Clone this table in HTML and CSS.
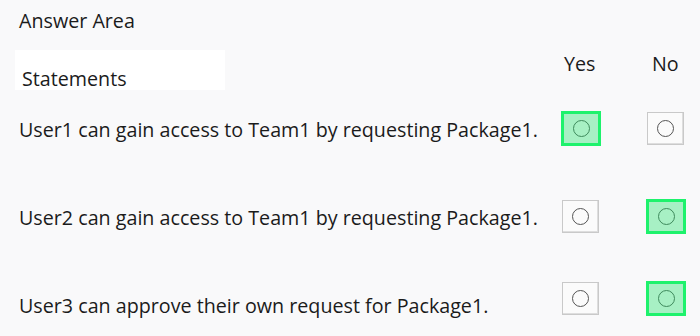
FILE: index.html
```html
<!DOCTYPE html>
<html lang="en">

<head>
    <meta charset="UTF-8">
    <meta name="viewport" content="width=device-width, initial-scale=1.0">
    <title>Answer Area</title>
    <link rel="stylesheet" href="styles.css">
</head>

<body>
    <div class="answer">
        <h2 class="answer_title">Answer Area</h2>
        <div class="answer_grid">
            <div class="head head_stmt">Statements</div>
            <div class="head head_yes">Yes</div>
            <div class="head head_no">No</div>

            <div class="stmt">User1 can gain access to Team1 by requesting Package1.</div>
            <div class="cell cell_yes"><span class="box box_on"><i class="dot"></i></span></div>
            <div class="cell cell_no"><span class="box"><i class="dot"></i></span></div>

            <div class="stmt">User2 can gain access to Team1 by requesting Package1.</div>
            <div class="cell cell_yes"><span class="box"><i class="dot"></i></span></div>
            <div class="cell cell_no"><span class="box box_on"><i class="dot"></i></span></div>

            <div class="stmt">User3 can approve their own request for Package1.</div>
            <div class="cell cell_yes"><span class="box"><i class="dot"></i></span></div>
            <div class="cell cell_no"><span class="box box_on"><i class="dot"></i></span></div>
        </div>
    </div>
</body>

</html>
```

FILE: styles.css
```css
* {
    margin: 0;
    padding: 0;
    box-sizing: border-box;
}

body {
    width: 700px;
    height: 336px;
    overflow: hidden;
    background-color: #f9f9fa;
    color: #1b1b1b;
    font-family: "Open Sans", "Noto Sans", sans-serif;
    font-size: 19.7px;
}

.answer {
    padding: 8px 0 0 19px;
}

.answer_title {
    font-size: 19.7px;
    font-weight: normal;
    line-height: 26px;
}

.answer_grid {
    display: grid;
    grid-template-columns: minmax(0, 1fr) 86px 86px;
    grid-template-rows: 50px 88px 88px 76px;
}

.head {
    line-height: 26px;
}

/* white strip behind the header label */
.head_stmt {
    align-self: end;
    width: 210px;
    height: 40px;
    margin: 0 0 -6px -4px;
    padding: 16px 0 0 7px;
    background-color: #fff;
}

.head_yes {
    padding-left: 36px;
    margin-top: 17px;
}

.head_no {
    padding-left: 38px;
    margin-top: 17px;
}

.stmt {
    align-self: start;
    margin-top: 33px;
    line-height: 26px;
    white-space: nowrap;
}

.cell {
    align-self: center;
    display: flex;
}

.cell_yes {
    padding-left: 34px;
}

.cell_no {
    padding-left: 33px;
}

.box {
    display: flex;
    align-items: center;
    justify-content: center;
    width: 37px;
    height: 33px;
    background-color: #fbfbfb;
    border: 1px solid #c9c9c9;
    box-shadow: inset -1px -1px 0 #dedede;
}

.box_on {
    width: 40px;
    height: 35px;
    margin-left: -1px;
    background-color: #a7f0c4;
    border: 3px solid #1ef26c;
    box-shadow: none;
}

.dot {
    display: block;
    width: 17px;
    height: 17px;
    border: 1.3px solid #555;
    border-radius: 50%;
}

.box_on .dot {
    border-color: #3e8a5c;
}
```
